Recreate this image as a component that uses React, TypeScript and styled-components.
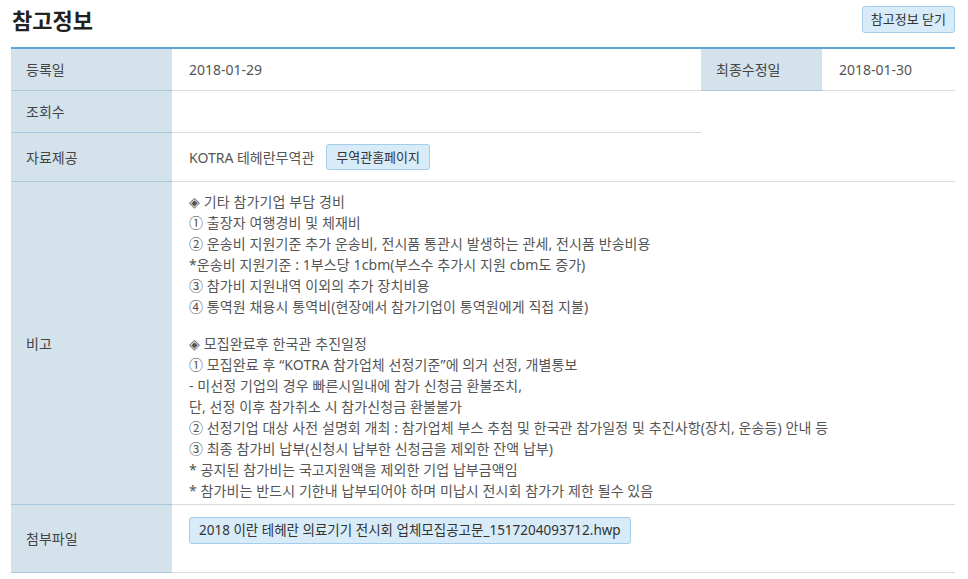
import React from 'react';
import styled, { createGlobalStyle } from 'styled-components';

const GlobalStyle = createGlobalStyle`
    body {
        margin: 0;
        background: #fff;
        font-family: "Noto Sans", "Noto Sans CJK KR", sans-serif;
        color: #555;
    }
`;

const Page = styled.div`
    padding: 0 13px 0 11px;
`;

const Header = styled.div`
    display: flex;
    justify-content: space-between;
    align-items: center;
    height: 38px;
    margin-bottom: 9px;
`;

const Title = styled.h2`
    margin: 0 0 0 1px;
    font-size: 22px;
    font-weight: 700;
    color: #222;
`;

const Button = styled.button`
    font-family: inherit;
    font-size: 13px;
    color: #333;
    background: #d7ebf9;
    border: 1px solid #a3cdea;
    border-radius: 3px;
    height: 27px;
    padding: 0 8px;
    line-height: 25px;
    cursor: pointer;
`;

const LinkButton = styled(Button)`
    height: 26px;
    margin-left: 12px;
    padding: 0 9px;
`;

const FileButton = styled(Button)`
    font-size: 13.5px;
    padding: 0 9px;
`;

const Table = styled.div`
    display: grid;
    grid-template-columns: 161px 1fr 121px 133px;
    border-top: 2px solid #5ea5d4;
`;

const Cell = styled.div<{ $col?: string; $row?: string }>`
    grid-column: ${(p) => p.$col || 'auto'};
    grid-row: ${(p) => p.$row || 'auto'};
    display: flex;
    align-items: center;
    padding: 10px 17px;
    min-height: 21px;
    line-height: 21px;
    font-size: 14px;
    border-bottom: 1px solid #dadada;
`;

const Label = styled(Cell)`
    background: #d4e2ec;
    color: #444;
    padding-left: 15px;
    border-bottom-color: #a9c7dd;
`;

const ButtonCell = styled(Cell)`
    padding-top: 11px;
    padding-bottom: 11px;
`;

const NoteCell = styled(Cell)`
    display: block;
    padding: 9px 17px 3px;
    letter-spacing: 0.1px;
`;

const FileCell = styled(Cell)`
    align-items: flex-start;
    padding: 12px 17px 28px;
`;

const Paragraph = styled.div`
    & + & {
        margin-top: 16px;
    }
`;

const Line = styled.div`
    line-height: 21px;
    white-space: nowrap;
`;

const firstBlock = [
    '◈ 기타 참가기업 부담 경비',
    '① 출장자 여행경비 및 체재비',
    '② 운송비 지원기준 추가 운송비, 전시품 통관시 발생하는 관세, 전시품 반송비용',
    '*운송비 지원기준 : 1부스당 1cbm(부스수 추가시 지원 cbm도 증가)',
    '③ 참가비 지원내역 이외의 추가 장치비용',
    '④ 통역원 채용시 통역비(현장에서 참가기업이 통역원에게 직접 지불)',
];

const secondBlock = [
    '◈ 모집완료후 한국관 추진일정',
    '① 모집완료 후 “KOTRA 참가업체 선정기준”에 의거 선정, 개별통보',
    '- 미선정 기업의 경우 빠른시일내에 참가 신청금 환불조치,',
    '단, 선정 이후 참가취소 시 참가신청금 환불불가',
    '② 선정기업 대상 사전 설명회 개최 : 참가업체 부스 추첨 및 한국관 참가일정 및 추진사항(장치, 운송등) 안내 등',
    '③ 최종 참가비 납부(신청시 납부한 신청금을 제외한 잔액 납부)',
    '* 공지된 참가비는 국고지원액을 제외한 기업 납부금액임',
    '* 참가비는 반드시 기한내 납부되어야 하며 미납시 전시회 참가가 제한 될수 있음',
];

const App: React.FC = () => {
    return (
        <Page>
            <GlobalStyle />
            <Header>
                <Title>참고정보</Title>
                <Button>참고정보 닫기</Button>
            </Header>
            <Table>
                <Label>등록일</Label>
                <Cell>2018-01-29</Cell>
                <Label>최종수정일</Label>
                <Cell>2018-01-30</Cell>

                <Label>조회수</Label>
                <Cell />
                <Cell $col="3 / 5" $row="2 / 4" />

                <Label>자료제공</Label>
                <ButtonCell>
                    KOTRA 테헤란무역관
                    <LinkButton>무역관홈페이지</LinkButton>
                </ButtonCell>

                <Label>비고</Label>
                <NoteCell $col="2 / 5">
                    <Paragraph>
                        {firstBlock.map((line) => (
                            <Line key={line}>{line}</Line>
                        ))}
                    </Paragraph>
                    <Paragraph>
                        {secondBlock.map((line) => (
                            <Line key={line}>{line}</Line>
                        ))}
                    </Paragraph>
                </NoteCell>

                <Label>첨부파일</Label>
                <FileCell $col="2 / 5">
                    <FileButton>2018 이란 테헤란 의료기기 전시회 업체모집공고문_1517204093712.hwp</FileButton>
                </FileCell>
            </Table>
        </Page>
    );
};

export default App;
